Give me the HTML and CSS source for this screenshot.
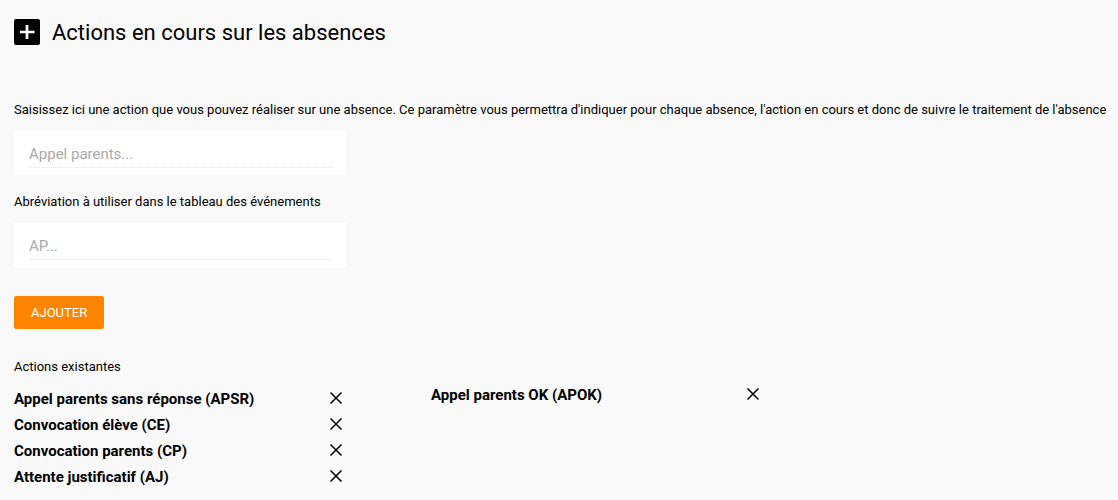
FILE: index.html
```html
<!DOCTYPE html>
<html lang="fr">
<head>
<meta charset="utf-8">
<title>Actions en cours sur les absences</title>
<link rel="stylesheet" href="styles.css">
</head>
<body>
<main class="page">
  <header class="header">
    <svg class="header-icon" viewBox="0 0 26 26" aria-hidden="true"><rect width="26" height="26" rx="2"/><path d="M6 13h14.500M13 6v14" stroke="#fff" stroke-width="2.700"/></svg>
    <h1 class="title">Actions en cours sur les absences</h1>
  </header>
  <form class="form">
    <label class="label" for="action">Saisissez ici une action que vous pouvez réaliser sur une absence. Ce paramètre vous permettra d'indiquer pour chaque absence, l'action en cours et donc de suivre le traitement de l'absence</label>
    <div class="field"><input class="input" id="action" type="text" placeholder="Appel parents..."></div>
    <label class="label" for="abbr">Abréviation à utiliser dans le tableau des événements</label>
    <div class="field"><input class="input" id="abbr" type="text" placeholder="AP..."></div>
    <button class="submit" type="button">AJOUTER</button>
  </form>
  <section>
    <h2 class="subtitle">Actions existantes</h2>
    <div class="columns">
      <ul class="list list-main">
        <li class="item"><span class="name">Appel parents sans réponse (APSR)</span><button class="remove" type="button" aria-label="Supprimer"><svg class="cross" viewBox="0 0 14 14"><path d="M1.500 1.500l11 11M12.500 1.500l-11 11"/></svg></button></li>
        <li class="item"><span class="name">Convocation élève (CE)</span><button class="remove" type="button" aria-label="Supprimer"><svg class="cross" viewBox="0 0 14 14"><path d="M1.500 1.500l11 11M12.500 1.500l-11 11"/></svg></button></li>
        <li class="item"><span class="name">Convocation parents (CP)</span><button class="remove" type="button" aria-label="Supprimer"><svg class="cross" viewBox="0 0 14 14"><path d="M1.500 1.500l11 11M12.500 1.500l-11 11"/></svg></button></li>
        <li class="item"><span class="name">Attente justificatif (AJ)</span><button class="remove" type="button" aria-label="Supprimer"><svg class="cross" viewBox="0 0 14 14"><path d="M1.500 1.500l11 11M12.500 1.500l-11 11"/></svg></button></li>
      </ul>
      <ul class="list">
        <li class="item"><span class="name">Appel parents OK (APOK)</span><button class="remove" type="button" aria-label="Supprimer"><svg class="cross" viewBox="0 0 14 14"><path d="M1.500 1.500l11 11M12.500 1.500l-11 11"/></svg></button></li>
      </ul>
    </div>
  </section>
</main>
</body>
</html>
```
FILE: styles.css
```css
* { box-sizing: border-box; }
body {
  margin: 0;
  background: #f9f9f9;
  color: #000;
  font: 13px/20px Roboto, sans-serif;
}
.page { padding: 16px 0 8px 14px; }
.header {
  display: flex;
  align-items: center;
  gap: 12px;
  height: 32px;
  margin-bottom: 52px;
}
.header-icon { width: 26px; height: 26px; }
.title { margin: 0; padding-top: 2px; font-size: 22px; line-height: 32px; font-weight: 400; }
.form { display: flex; flex-direction: column; align-items: flex-start; }
.label { margin-bottom: 11px; }
.field {
  width: 332px;
  max-width: 100%;
  height: 44px;
  margin-bottom: 17px;
  padding: 8px 14px 7px 15px;
  background: #fff;
}
.input {
  display: block;
  width: 100%;
  height: 29px;
  padding: 1px 0 0;
  border: 0;
  border-bottom: 1px dotted #e4e4e4;
  background: transparent;
  font: 15px/20px Roboto, sans-serif;
}
.input::placeholder { color: #aaa; opacity: 1; }
.submit {
  height: 33px;
  margin: 12px 0 28px;
  padding: 0 17px;
  border: 0;
  border-radius: 2px;
  background: #ff8500;
  color: #fff;
  font: 13px/20px Roboto, sans-serif;
}
.subtitle { margin: 0 0 5px; font-size: 13px; font-weight: 400; }
.columns {
  display: grid;
  grid-template-columns: repeat(2, 330px);
  column-gap: 87px;
}
.list { margin: 0; padding: 0; list-style: none; }
.list-main { padding-top: 4px; }
.item { display: flex; align-items: center; justify-content: space-between; height: 26px; }
.name { font-size: 15px; font-weight: 700; }
.remove { display: flex; padding: 0 1px 2px; border: 0; background: transparent; }
.cross { width: 14px; height: 14px; fill: none; stroke: #000; stroke-width: 1.5; }
```
